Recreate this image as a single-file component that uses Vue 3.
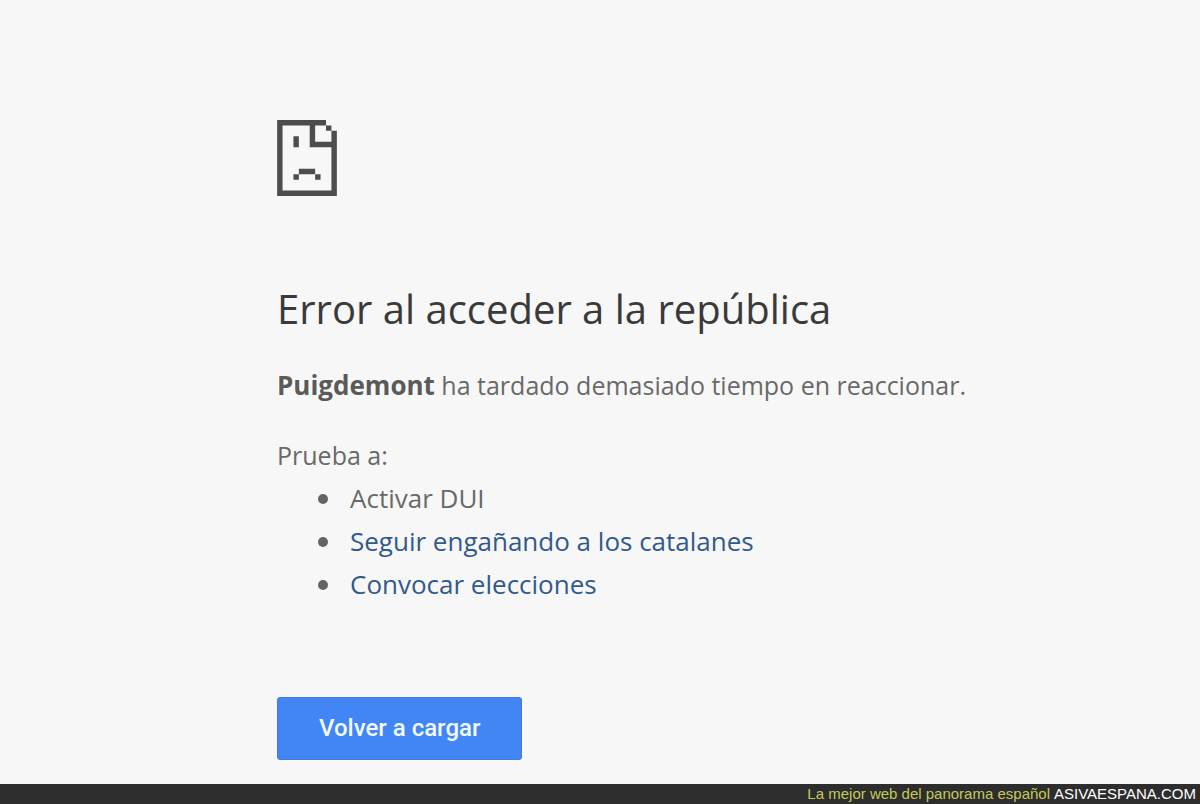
<script setup>
const suggestions = [
  { text: 'Activar DUI' },
  { text: 'Seguir engañando a los catalanes', href: '#seguir' },
  { text: 'Convocar elecciones', href: '#elecciones' },
]

function reload() {
  window.location.reload()
}
</script>

<template>
  <div class="page">
    <main class="error">
      <svg class="sad-page" viewBox="0 0 11 14" aria-hidden="true">
        <path
          fill="#4d4d4d"
          fill-rule="evenodd"
          d="M0 0H9V1H10V2H11V14H0ZM1 1V13H10V5H6V1ZM7 1V4H10V2H9V1ZM3 3H4V5H3ZM4 9H7V10H4ZM3 10H4V11H3ZM7 10H8V11H7Z"
        />
      </svg>
      <h1>Error al acceder a la república</h1>
      <p class="summary"><strong>Puigdemont</strong> ha tardado demasiado tiempo en reaccionar.</p>
      <p class="try">Prueba a:</p>
      <ul>
        <li v-for="item in suggestions" :key="item.text">
          <a v-if="item.href" :href="item.href">{{ item.text }}</a>
          <template v-else>{{ item.text }}</template>
        </li>
      </ul>
      <button type="button" @click="reload">Volver a cargar</button>
    </main>
    <footer>
      <span class="tagline">La mejor web del panorama español</span>
      <a href="#inicio">ASIVAESPANA.COM</a>
    </footer>
  </div>
</template>

<style>
body {
  margin: 0;
  background: #f7f7f7;
}
</style>

<style scoped>
.page {
  display: flex;
  flex-direction: column;
  min-height: 100vh;
  background: #f7f7f7;
  font-family: "Open Sans", "Noto Sans", sans-serif;
  color: #696969;
}

.error {
  flex: 1;
  box-sizing: border-box;
  padding: 120px 200px 24px 277px;
  font-size: 26px;
  line-height: 43px;
}

.sad-page {
  display: block;
  width: 60px;
  height: 76px;
}

h1 {
  margin: 83px 0 0;
  font-size: 40px;
  line-height: 60px;
  font-weight: 400;
  color: #3a3a3a;
}

p {
  margin: 0;
  font-size: 25px;
}

.summary {
  margin-top: 25px;
}

.summary strong {
  font-size: 26px;
  font-weight: 700;
  color: #5a5a5a;
}

.try {
  margin-top: 27px;
}

ul {
  margin: 0;
  padding-left: 41px;
  list-style: none;
}

li {
  display: flex;
  align-items: center;
  gap: 22px;
}

li::before {
  content: "";
  width: 10px;
  height: 10px;
  border-radius: 50%;
  background: #646464;
}

li a {
  color: #315a8c;
  text-decoration: none;
}

button {
  display: block;
  margin-top: 91px;
  padding: 0 41px;
  border: 1px solid #4579d6;
  border-radius: 3px;
  background: #4285f4;
  color: #f3faff;
  font-family: Roboto, sans-serif;
  font-size: 24px;
  font-weight: 500;
  line-height: 61px;
}

footer {
  display: flex;
  justify-content: flex-end;
  gap: 4px;
  padding: 0 4px;
  background: #2d2d2d;
  font-family: "Liberation Sans", Arial, sans-serif;
  font-size: 15px;
  line-height: 20px;
}

.tagline {
  color: #c5c95c;
}

footer a {
  color: #fff;
  text-decoration: none;
}
</style>
